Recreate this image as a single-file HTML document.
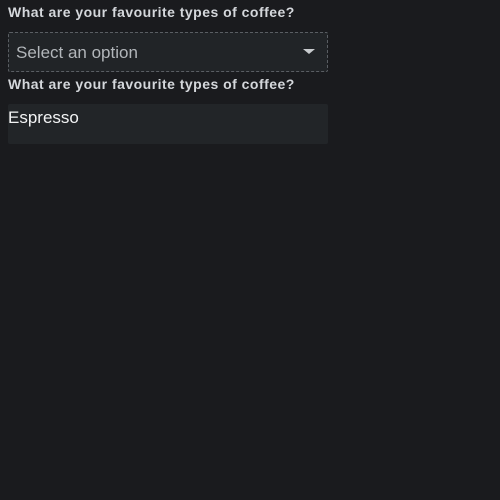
<!DOCTYPE html>
<html><head><style>
html,body{margin:0;padding:0;background:#1a1b1e;width:500px;height:500px;overflow:hidden;font-family:"Liberation Sans",sans-serif;}
.lbl{position:absolute;left:8px;font-weight:bold;font-size:14px;color:#d4d7db;white-space:nowrap;letter-spacing:0.48px}
.sel{position:absolute;left:8px;top:32px;width:318px;height:38px;border:1px dashed #5a5e63;background:#212427;border-radius:2px}
.sel span{position:absolute;left:7px;top:10px;font-size:17px;color:#b2b6ba}
.arrow{position:absolute;left:294px;top:16px;width:0;height:0;border-left:6px solid transparent;border-right:6px solid transparent;border-top:5px solid #c8cbce}
.ta{position:absolute;left:8px;top:104px;width:320px;height:40px;background:#222528;border-radius:2px}
.ta span{position:absolute;left:0;top:4px;font-size:17px;color:#f2f3f4}
</style></head><body>
<div class="lbl" style="top:4px">What are your favourite types of coffee?</div>
<div class="sel"><span>Select an option</span><div class="arrow"></div></div>
<div class="lbl" style="top:76px">What are your favourite types of coffee?</div>
<div class="ta"><span>Espresso</span></div>
</body></html>
